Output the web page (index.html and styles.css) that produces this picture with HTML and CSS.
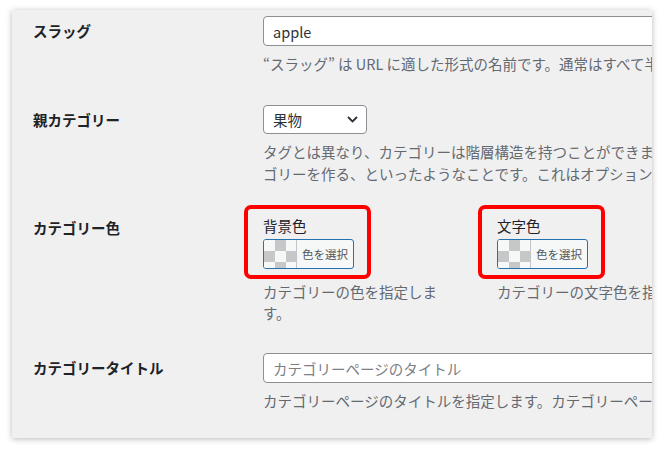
FILE: index.html
```html
<!DOCTYPE html>
<html lang="ja">
<head>
<meta charset="utf-8">
<title>カテゴリーの編集</title>
<link rel="stylesheet" href="styles.css">
</head>
<body>
<div class="panel">
<div class="form">

<div class="row first">
<label class="th" for="slug">スラッグ</label>
<div class="td">
<input class="text" type="text" id="slug" value="apple">
<p class="desc">“スラッグ” は URL に適した形式の名前です。通常はすべて半角小文字で、英数字とハイフンのみが使われます。</p>
</div>
</div>

<div class="row">
<label class="th" for="parent">親カテゴリー</label>
<div class="td">
<div class="select" id="parent"><span>果物</span>
<svg class="chev" width="11" height="7" viewBox="0 0 11 7"><path d="M1 1l4.5 4.5L10 1" fill="none" stroke="#2c3338" stroke-width="1.8"/></svg>
</div>
<p class="desc">タグとは異なり、カテゴリーは階層構造を持つことができます。たとえば、ジャズというカテゴリーの下にビバップやビッグバンドというカテ<br>ゴリーを作る、といったようなことです。これはオプションです。</p>
</div>
</div>

<div class="row">
<div class="th th-colors">カテゴリー色</div>
<div class="td colors">
<div class="color-col">
<div class="pick">
<div class="pick-label">背景色</div>
<button class="swatch-btn"><span class="swatch"></span><span class="btn-text">色を選択</span></button>
<span class="mark"></span>
</div>
<p class="desc wrap">カテゴリーの色を指定します。</p>
</div>
<div class="color-col">
<div class="pick">
<div class="pick-label">文字色</div>
<button class="swatch-btn"><span class="swatch"></span><span class="btn-text">色を選択</span></button>
<span class="mark"></span>
</div>
<p class="desc wrap-col">カテゴリーの文字色を指定します。</p>
</div>
</div>
</div>

<div class="row">
<label class="th" for="cattitle">カテゴリータイトル</label>
<div class="td">
<input class="text" type="text" id="cattitle" placeholder="カテゴリーページのタイトル">
<p class="desc">カテゴリーページのタイトルを指定します。カテゴリーページの見出しとして表示されます。</p>
</div>
</div>

</div>
</div>
</body>
</html>
```

FILE: styles.css
```css
body {
margin: 0;
padding: 10px 12px;
background: #fff;
font-family: "Noto Sans CJK JP", "Noto Sans", sans-serif;
}
.panel {
width: 640px;
height: 428px;
background: #f0f0f1;
box-shadow: 0 1px 6px rgba(0,0,0,.28);
overflow: hidden;
}
.form {
width: 900px;
padding-left: 21px;
}
.row {
display: flex;
padding: 15px 0;
}
.row.first {
padding-top: 6px;
}
.th {
width: 230px;
flex: none;
padding-top: 4px;
font-size: 14.5px;
line-height: 22px;
font-weight: bold;
color: #1d2327;
}
.th-colors {
padding-top: 2px;
}
.td {
flex: 1;
min-width: 0;
}
.text {
box-sizing: border-box;
display: block;
width: 100%;
height: 30px;
margin: 0;
padding: 0 9px;
border: 1px solid #8c8f94;
border-radius: 4px;
background: #fff;
font-family: inherit;
font-size: 14.5px;
color: #2c3338;
}
.text::placeholder {
color: #7c8085;
}
.desc {
margin: 7px 0 0;
font-size: 14.5px;
line-height: 22px;
color: #646970;
white-space: nowrap;
}
.select {
box-sizing: border-box;
display: flex;
align-items: center;
justify-content: space-between;
width: 104px;
height: 29px;
padding: 0 8px 0 9px;
border: 1px solid #8c8f94;
border-radius: 4px;
background: #fff;
font-size: 14.5px;
color: #2c3338;
}
.chev {
display: block;
}
.colors {
display: grid;
grid-template-columns: 180px 1fr;
column-gap: 54px;
}
.pick {
position: relative;
width: fit-content;
}
.pick-label {
font-size: 14.5px;
line-height: 22px;
color: #1d2327;
}
.swatch-btn {
box-sizing: border-box;
display: flex;
width: 91px;
height: 30px;
margin-top: 2px;
padding: 0;
border: 1px solid #2271b1;
border-radius: 3px;
background: #f6f7f7;
overflow: hidden;
font-family: inherit;
}
.swatch {
width: 32px;
height: 100%;
flex: none;
border-right: 1px solid #c3c4c7;
background: repeating-conic-gradient(#c6c7c9 0 25%, #f6f7f7 0 50%) 0 0 / 22px 22px;
}
.btn-text {
flex: 1;
display: flex;
align-items: center;
justify-content: center;
height: 100%;
font-size: 11.5px;
color: #50575e;
}
.mark {
position: absolute;
top: -10px;
left: -19px;
right: -17px;
bottom: -10px;
border: 4px solid #f00;
border-radius: 7px;
pointer-events: none;
}
.colors .desc {
margin-top: 12px;
line-height: 21px;
}
.desc.wrap {
white-space: normal;
}
```
